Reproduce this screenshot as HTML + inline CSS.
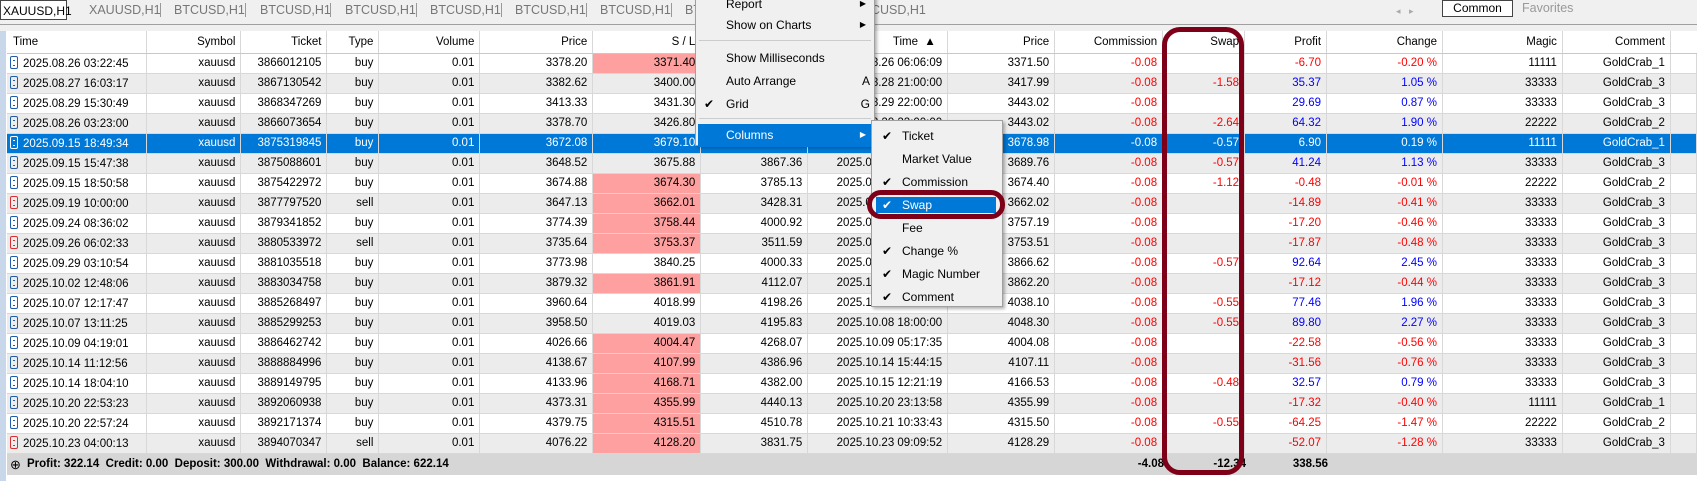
<!DOCTYPE html>
<html><head><meta charset="utf-8"><style>
*{box-sizing:border-box;margin:0;padding:0}
body{width:1697px;height:481px;overflow:hidden;background:#fff;font-family:"Liberation Sans",sans-serif;font-size:11.5px;color:#000;position:relative}
.tabs{position:absolute;left:0;top:0;width:1697px;height:25px;background:#f0f0f0;border-bottom:1px solid #a0a0a0}
.tab{position:absolute;top:3px;color:#777;font-size:12.5px}
.sep{position:absolute;top:3px;width:1px;height:14px;background:#999}
.band{position:absolute;left:0;top:25px;width:1697px;height:6px;background:#f0f0f0}
.strip{position:absolute;left:0;top:31px;width:6px;height:450px;background:#c8d8ea}
table{position:absolute;left:7px;top:31px;border-collapse:collapse;table-layout:fixed}
td,th{height:20px;padding:0 5px;white-space:nowrap;overflow:hidden;text-align:right;font-weight:normal;border-right:1px solid #d8d8d8;border-bottom:1px solid #d8d8d8}
th{height:22px;border-bottom:1px solid #c8c8c8}
tr:nth-child(odd) td{background:#ececec}
tr.w td{background:#fff}
td.l,th.l{text-align:left;padding-left:3px}
.ic{display:inline-block;width:8px;height:13px;border:1.5px solid #1f5fa8;border-radius:2px;vertical-align:-2px;margin-right:5px;position:relative}
.ic:after{content:"";position:absolute;left:2px;top:3px;width:2px;height:4px;border-top:1px solid #1f5fa8;border-bottom:1px solid #1f5fa8}
.ic.s{border-color:#d83030}.ic.s:after{border-color:#d83030}
td.p{background:#ffa0a0!important}
.r{color:#f00}.b{color:#00f}
tr.sel td{background:#0078d7!important;color:#fff!important}
tr.sel .ic{border-color:#fff}tr.sel .ic:after{border-color:#fff}
.sum{position:absolute;left:7px;top:454px;width:1690px;height:21px;background:#d6d6d6;font-weight:bold;font-size:11.5px;line-height:21px}
.menu{position:absolute;background:#f0f0f0;border:1px solid #a0a0a0;box-shadow:2px 2px 3px rgba(0,0,0,.3);font-size:12px}
.mi{position:absolute;left:0;right:0;height:22px;line-height:22px}
.mi span{position:absolute}
.hl{background:#0078d7;color:#fff}
.msep{position:absolute;left:3px;right:3px;height:1px;background:#ccc}
.ring{position:absolute;border:5px solid #7d0018}
</style></head><body>
<div class="tabs">
<div style="position:absolute;left:0;top:0;width:67px;height:20px;background:#fff;border:1px solid #444;font-size:12px;padding:3px 2px">XAUUSD,H1</div>
<span class="tab" style="left:89px">XAUUSD,H1</span><span class="sep" style="left:160px"></span>
<span class="tab" style="left:174px">BTCUSD,H1</span><span class="sep" style="left:245px"></span>
<span class="tab" style="left:260px">BTCUSD,H1</span><span class="sep" style="left:330px"></span>
<span class="tab" style="left:345px">BTCUSD,H1</span><span class="sep" style="left:416px"></span>
<span class="tab" style="left:430px">BTCUSD,H1</span><span class="sep" style="left:501px"></span>
<span class="tab" style="left:515px">BTCUSD,H1</span><span class="sep" style="left:586px"></span>
<span class="tab" style="left:600px">BTCUSD,H1</span><span class="sep" style="left:671px"></span>
<span class="tab" style="left:685px">BTCUSD,H1</span><span class="sep" style="left:756px"></span>
<span class="tab" style="left:770px">BTCUSD,H1</span><span class="sep" style="left:841px"></span>
<span class="tab" style="left:855px">BTCUSD,H1</span>
<span class="tab" style="left:1396px;color:#aaa;font-size:9px;top:6px">◂</span><span class="tab" style="left:1409px;color:#aaa;font-size:9px;top:6px">▸</span>
<div style="position:absolute;left:1442px;top:0;width:71px;height:17px;background:#fff;border:1px solid #444;font-size:12px;text-align:center;line-height:15px">Common</div>
<span class="tab" style="left:1522px;top:1px;color:#999">Favorites</span>
</div>
<div class="band"></div>
<div class="strip"></div>
<table>
<colgroup><col style="width:140px"><col style="width:94px"><col style="width:86px"><col style="width:52px"><col style="width:101px"><col style="width:113px"><col style="width:108px"><col style="width:107px"><col style="width:140px"><col style="width:107px"><col style="width:108px"><col style="width:82px"><col style="width:82px"><col style="width:116px"><col style="width:120px"><col style="width:108px"><col style="width:26px"></colgroup>
<tr class="w"><th class="l" style="padding-left:6px">Time</th><th>Symbol</th><th>Ticket</th><th>Type</th><th>Volume</th><th>Price</th><th>S / L</th><th>T / P</th><th>Time &nbsp;▲&nbsp;&nbsp;</th><th>Price</th><th>Commission</th><th>Swap</th><th>Profit</th><th>Change</th><th>Magic</th><th>Comment</th><th style="border-right:0"></th></tr>
<tr class="w"><td class="l"><i class="ic"></i>2025.08.26 03:22:45</td><td>xauusd</td><td>3866012105</td><td>buy</td><td>0.01</td><td>3378.20</td><td class="p">3371.40</td><td>3400.00</td><td>2025.08.26 06:06:09</td><td>3371.50</td><td class="r">-0.08</td><td></td><td class="r">-6.70</td><td class="r">-0.20 %</td><td>11111</td><td>GoldCrab_1</td><td></td></tr>
<tr><td class="l"><i class="ic"></i>2025.08.27 16:03:17</td><td>xauusd</td><td>3867130542</td><td>buy</td><td>0.01</td><td>3382.62</td><td>3400.00</td><td>3417.99</td><td>2025.08.28 21:00:00</td><td>3417.99</td><td class="r">-0.08</td><td class="r">-1.58</td><td class="b">35.37</td><td class="b">1.05 %</td><td>33333</td><td>GoldCrab_3</td><td></td></tr>
<tr class="w"><td class="l"><i class="ic"></i>2025.08.29 15:30:49</td><td>xauusd</td><td>3868347269</td><td>buy</td><td>0.01</td><td>3413.33</td><td>3431.30</td><td>3443.00</td><td>2025.08.29 22:00:00</td><td>3443.02</td><td class="r">-0.08</td><td></td><td class="b">29.69</td><td class="b">0.87 %</td><td>33333</td><td>GoldCrab_3</td><td></td></tr>
<tr><td class="l"><i class="ic"></i>2025.08.26 03:23:00</td><td>xauusd</td><td>3866073654</td><td>buy</td><td>0.01</td><td>3378.70</td><td>3426.80</td><td>3443.00</td><td>2025.08.29 22:00:00</td><td>3443.02</td><td class="r">-0.08</td><td class="r">-2.64</td><td class="b">64.32</td><td class="b">1.90 %</td><td>22222</td><td>GoldCrab_2</td><td></td></tr>
<tr class="sel"><td class="l"><i class="ic"></i>2025.09.15 18:49:34</td><td>xauusd</td><td>3875319845</td><td>buy</td><td>0.01</td><td>3672.08</td><td>3679.10</td><td>3867.36</td><td>2025.09.16 01:00:00</td><td>3678.98</td><td>-0.08</td><td>-0.57</td><td>6.90</td><td>0.19 %</td><td>11111</td><td>GoldCrab_1</td><td></td></tr>
<tr><td class="l"><i class="ic"></i>2025.09.15 15:47:38</td><td>xauusd</td><td>3875088601</td><td>buy</td><td>0.01</td><td>3648.52</td><td>3675.88</td><td>3867.36</td><td>2025.09.16 01:00:00</td><td>3689.76</td><td class="r">-0.08</td><td class="r">-0.57</td><td class="b">41.24</td><td class="b">1.13 %</td><td>33333</td><td>GoldCrab_3</td><td></td></tr>
<tr class="w"><td class="l"><i class="ic"></i>2025.09.15 18:50:58</td><td>xauusd</td><td>3875422972</td><td>buy</td><td>0.01</td><td>3674.88</td><td class="p">3674.30</td><td>3785.13</td><td>2025.09.17 01:00:00</td><td>3674.40</td><td class="r">-0.08</td><td class="r">-1.12</td><td class="r">-0.48</td><td class="r">-0.01 %</td><td>22222</td><td>GoldCrab_2</td><td></td></tr>
<tr><td class="l"><i class="ic s"></i>2025.09.19 10:00:00</td><td>xauusd</td><td>3877797520</td><td>sell</td><td>0.01</td><td>3647.13</td><td class="p">3662.01</td><td>3428.31</td><td>2025.09.19 13:00:00</td><td>3662.02</td><td class="r">-0.08</td><td></td><td class="r">-14.89</td><td class="r">-0.41 %</td><td>33333</td><td>GoldCrab_3</td><td></td></tr>
<tr class="w"><td class="l"><i class="ic"></i>2025.09.24 08:36:02</td><td>xauusd</td><td>3879341852</td><td>buy</td><td>0.01</td><td>3774.39</td><td class="p">3758.44</td><td>4000.92</td><td>2025.09.24 13:00:00</td><td>3757.19</td><td class="r">-0.08</td><td></td><td class="r">-17.20</td><td class="r">-0.46 %</td><td>33333</td><td>GoldCrab_3</td><td></td></tr>
<tr><td class="l"><i class="ic s"></i>2025.09.26 06:02:33</td><td>xauusd</td><td>3880533972</td><td>sell</td><td>0.01</td><td>3735.64</td><td class="p">3753.37</td><td>3511.59</td><td>2025.09.26 13:00:00</td><td>3753.51</td><td class="r">-0.08</td><td></td><td class="r">-17.87</td><td class="r">-0.48 %</td><td>33333</td><td>GoldCrab_3</td><td></td></tr>
<tr class="w"><td class="l"><i class="ic"></i>2025.09.29 03:10:54</td><td>xauusd</td><td>3881035518</td><td>buy</td><td>0.01</td><td>3773.98</td><td>3840.25</td><td>4000.33</td><td>2025.09.30 13:00:00</td><td>3866.62</td><td class="r">-0.08</td><td class="r">-0.57</td><td class="b">92.64</td><td class="b">2.45 %</td><td>33333</td><td>GoldCrab_3</td><td></td></tr>
<tr><td class="l"><i class="ic"></i>2025.10.02 12:48:06</td><td>xauusd</td><td>3883034758</td><td>buy</td><td>0.01</td><td>3879.32</td><td class="p">3861.91</td><td>4112.07</td><td>2025.10.02 15:00:00</td><td>3862.20</td><td class="r">-0.08</td><td></td><td class="r">-17.12</td><td class="r">-0.44 %</td><td>33333</td><td>GoldCrab_3</td><td></td></tr>
<tr class="w"><td class="l"><i class="ic"></i>2025.10.07 12:17:47</td><td>xauusd</td><td>3885268497</td><td>buy</td><td>0.01</td><td>3960.64</td><td>4018.99</td><td>4198.26</td><td>2025.10.08 18:00:00</td><td>4038.10</td><td class="r">-0.08</td><td class="r">-0.55</td><td class="b">77.46</td><td class="b">1.96 %</td><td>33333</td><td>GoldCrab_3</td><td></td></tr>
<tr><td class="l"><i class="ic"></i>2025.10.07 13:11:25</td><td>xauusd</td><td>3885299253</td><td>buy</td><td>0.01</td><td>3958.50</td><td>4019.03</td><td>4195.83</td><td>2025.10.08 18:00:00</td><td>4048.30</td><td class="r">-0.08</td><td class="r">-0.55</td><td class="b">89.80</td><td class="b">2.27 %</td><td>33333</td><td>GoldCrab_3</td><td></td></tr>
<tr class="w"><td class="l"><i class="ic"></i>2025.10.09 04:19:01</td><td>xauusd</td><td>3886462742</td><td>buy</td><td>0.01</td><td>4026.66</td><td class="p">4004.47</td><td>4268.07</td><td>2025.10.09 05:17:35</td><td>4004.08</td><td class="r">-0.08</td><td></td><td class="r">-22.58</td><td class="r">-0.56 %</td><td>33333</td><td>GoldCrab_3</td><td></td></tr>
<tr><td class="l"><i class="ic"></i>2025.10.14 11:12:56</td><td>xauusd</td><td>3888884996</td><td>buy</td><td>0.01</td><td>4138.67</td><td class="p">4107.99</td><td>4386.96</td><td>2025.10.14 15:44:15</td><td>4107.11</td><td class="r">-0.08</td><td></td><td class="r">-31.56</td><td class="r">-0.76 %</td><td>33333</td><td>GoldCrab_3</td><td></td></tr>
<tr class="w"><td class="l"><i class="ic"></i>2025.10.14 18:04:10</td><td>xauusd</td><td>3889149795</td><td>buy</td><td>0.01</td><td>4133.96</td><td class="p">4168.71</td><td>4382.00</td><td>2025.10.15 12:21:19</td><td>4166.53</td><td class="r">-0.08</td><td class="r">-0.48</td><td class="b">32.57</td><td class="b">0.79 %</td><td>33333</td><td>GoldCrab_3</td><td></td></tr>
<tr><td class="l"><i class="ic"></i>2025.10.20 22:53:23</td><td>xauusd</td><td>3892060938</td><td>buy</td><td>0.01</td><td>4373.31</td><td class="p">4355.99</td><td>4440.13</td><td>2025.10.20 23:13:58</td><td>4355.99</td><td class="r">-0.08</td><td></td><td class="r">-17.32</td><td class="r">-0.40 %</td><td>11111</td><td>GoldCrab_1</td><td></td></tr>
<tr class="w"><td class="l"><i class="ic"></i>2025.10.20 22:57:24</td><td>xauusd</td><td>3892171374</td><td>buy</td><td>0.01</td><td>4379.75</td><td class="p">4315.51</td><td>4510.78</td><td>2025.10.21 10:33:43</td><td>4315.50</td><td class="r">-0.08</td><td class="r">-0.55</td><td class="r">-64.25</td><td class="r">-1.47 %</td><td>22222</td><td>GoldCrab_2</td><td></td></tr>
<tr><td class="l"><i class="ic s"></i>2025.10.23 04:00:13</td><td>xauusd</td><td>3894070347</td><td>sell</td><td>0.01</td><td>4076.22</td><td class="p">4128.20</td><td>3831.75</td><td>2025.10.23 09:09:52</td><td>4128.29</td><td class="r">-0.08</td><td></td><td class="r">-52.07</td><td class="r">-1.28 %</td><td>33333</td><td>GoldCrab_3</td><td></td></tr>
</table>
<div class="sum"><span style="position:absolute;left:3px;font-weight:normal;font-size:13px">⊕</span><span style="position:absolute;left:20px">Profit: 322.14&nbsp; Credit: 0.00&nbsp; Deposit: 300.00&nbsp; Withdrawal: 0.00&nbsp; Balance: 622.14</span><span style="position:absolute;right:533px">-4.08</span><span style="position:absolute;right:451px">-12.34</span><span style="position:absolute;right:369px">338.56</span></div>

<div class="menu" style="left:695px;top:-8px;width:180px;height:154px">
<div class="mi" style="top:0"><span style="left:30px">Report</span><span style="right:8px;font-size:8px">▶</span></div>
<div class="mi" style="top:21px"><span style="left:30px">Show on Charts</span><span style="right:8px;font-size:8px">▶</span></div>
<div class="msep" style="top:47px"></div>
<div class="mi" style="top:54px"><span style="left:30px">Show Milliseconds</span></div>
<div class="mi" style="top:77px"><span style="left:30px">Auto Arrange</span><span style="right:4px">A</span></div>
<div class="mi" style="top:100px"><span style="left:8px">✔</span><span style="left:30px">Grid</span><span style="right:4px">G</span></div>
<div class="msep" style="top:125px"></div>
<div class="mi hl" style="top:131px;left:2px;right:2px;height:23px"><span style="left:28px">Columns</span><span style="right:6px;font-size:8px">▶</span></div>
</div>
<div class="menu" style="left:871px;top:120px;width:132px;height:187px">
<div class="mi" style="top:4px"><span style="left:10px">✔</span><span style="left:30px">Ticket</span></div>
<div class="mi" style="top:27px"><span style="left:30px">Market Value</span></div>
<div class="mi" style="top:50px"><span style="left:10px">✔</span><span style="left:30px">Commission</span></div>
<div class="mi hl" style="top:76px;left:4px;right:6px;height:16px;line-height:16px"><span style="left:6px">✔</span><span style="left:26px">Swap</span></div>
<div class="mi" style="top:96px"><span style="left:30px">Fee</span></div>
<div class="mi" style="top:119px"><span style="left:10px">✔</span><span style="left:30px">Change %</span></div>
<div class="mi" style="top:142px"><span style="left:10px">✔</span><span style="left:30px">Magic Number</span></div>
<div class="mi" style="top:165px"><span style="left:10px">✔</span><span style="left:30px">Comment</span></div>
</div>
<div class="ring" style="left:867px;top:190px;width:138px;height:29px;border-radius:14px"></div>
<div class="ring" style="left:1162px;top:27px;width:82px;height:448px;border-radius:18px"></div>
</body></html>
